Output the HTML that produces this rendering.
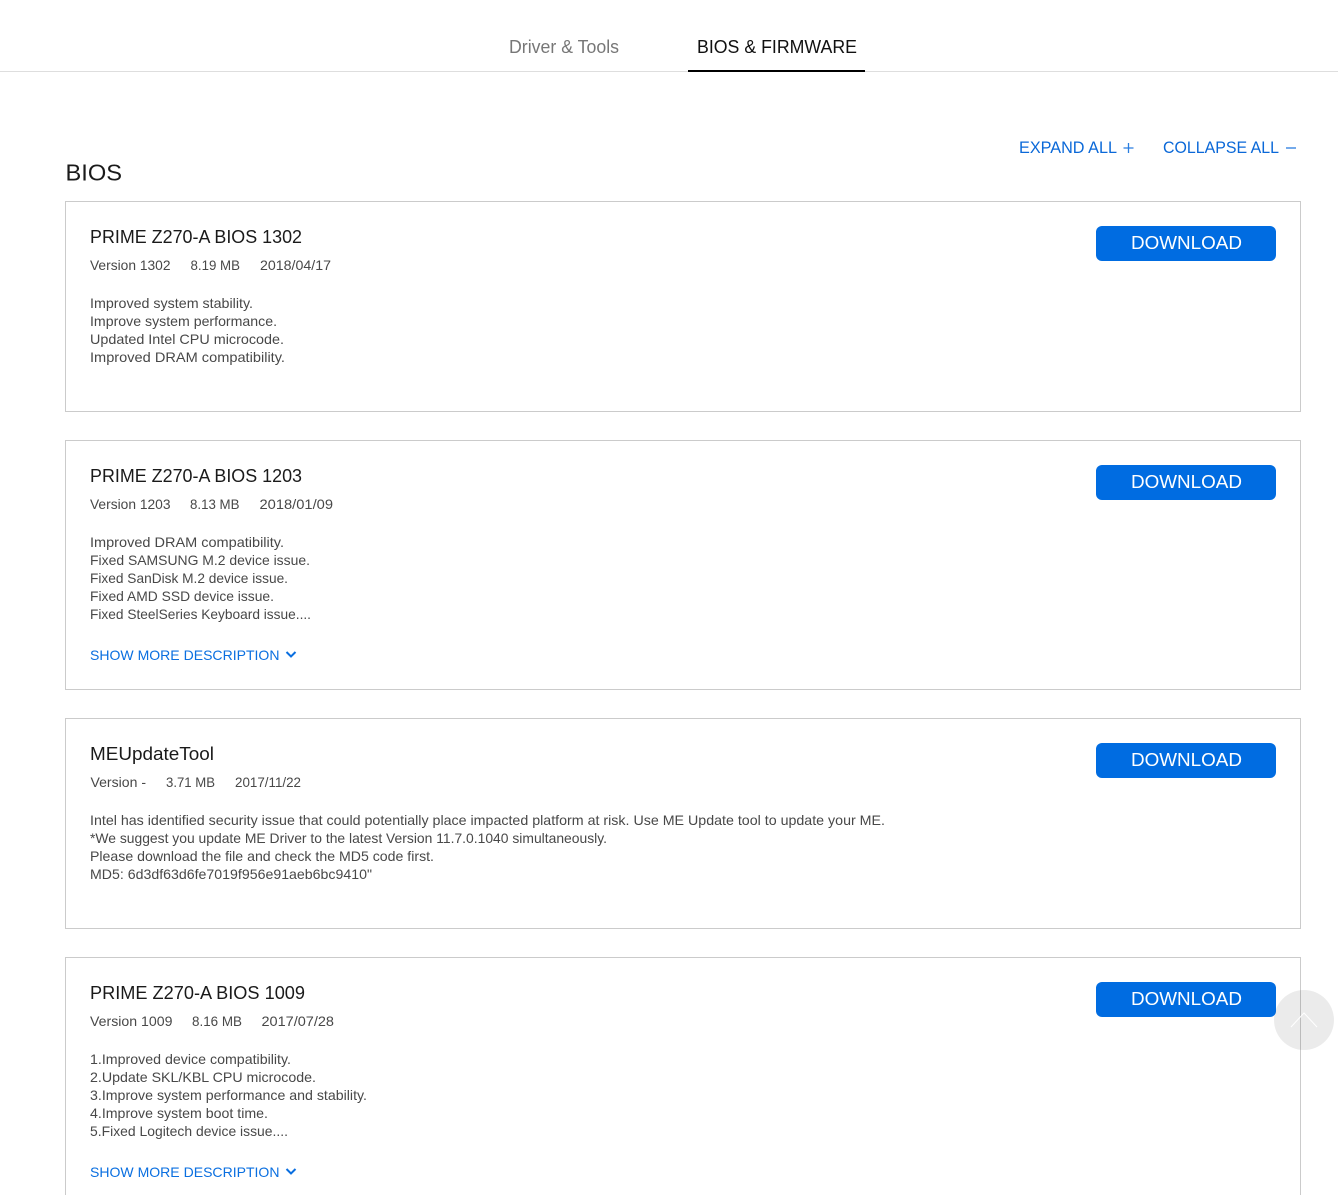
<!DOCTYPE html>
<html lang="en">
<head>
<meta charset="utf-8">
<title>BIOS &amp; FIRMWARE</title>
<style>
html,body{margin:0;padding:0;width:1338px;height:1195px;overflow:hidden;background:#fff}
svg{display:block;font-family:"Liberation Sans",sans-serif}
.t{font-size:18px;fill:#1a1a1a}
.m{font-size:14px;fill:#484848}
.d{font-size:14px;fill:#484848}
.s{font-size:14px;fill:#0a6fe0}
.b{font-size:18px;fill:#fff}
.e{font-size:17px;fill:#0a68d8}
.c{fill:#fff;stroke:#cbcbcb;stroke-width:1}
.btn{fill:#006ce1}
</style>
</head>
<body>
<svg width="1338" height="1195" viewBox="0 0 1338 1195" xmlns="http://www.w3.org/2000/svg">
<rect x="0" y="71" width="1338" height="1" fill="#dedede"/>
<rect x="688" y="70" width="177" height="2" fill="#000"/>
<text x="509" y="53" font-size="18" fill="#777" textLength="110" lengthAdjust="spacingAndGlyphs">Driver &amp; Tools</text>
<text x="697" y="53" font-size="18" fill="#111" textLength="160" lengthAdjust="spacingAndGlyphs">BIOS &amp; FIRMWARE</text>

<text class="e" x="1019" y="153" textLength="98" lengthAdjust="spacingAndGlyphs">EXPAND ALL</text>
<path d="M1123.500 148h10M1128.500 143v10" stroke="#2a7de0" stroke-width="1.300" fill="none"/>
<text class="e" x="1163" y="153" textLength="116" lengthAdjust="spacingAndGlyphs">COLLAPSE ALL</text>
<path d="M1286 148h10" stroke="#2a7de0" stroke-width="1.300" fill="none"/>

<text x="65.500" y="180.500" font-size="23" fill="#1a1a1a" textLength="56.500" lengthAdjust="spacingAndGlyphs">BIOS</text>

<!-- Card 1 -->
<rect class="c" x="65.500" y="201.500" width="1235" height="210"/>
<text class="t" x="90" y="243" textLength="212" lengthAdjust="spacingAndGlyphs">PRIME Z270-A BIOS 1302</text>
<text class="m" x="90" y="270" textLength="80.500" lengthAdjust="spacingAndGlyphs">Version 1302</text>
<text class="m" x="190.500" y="270" textLength="49.500" lengthAdjust="spacingAndGlyphs">8.19 MB</text>
<text class="m" x="260" y="270" textLength="71" lengthAdjust="spacingAndGlyphs">2018/04/17</text>
<text class="d" x="90" y="308" textLength="163" lengthAdjust="spacingAndGlyphs">Improved system stability.</text>
<text class="d" x="90" y="326" textLength="187" lengthAdjust="spacingAndGlyphs">Improve system performance.</text>
<text class="d" x="90" y="344" textLength="194" lengthAdjust="spacingAndGlyphs">Updated Intel CPU microcode.</text>
<text class="d" x="90" y="362" textLength="195" lengthAdjust="spacingAndGlyphs">Improved DRAM compatibility.</text>
<rect class="btn" x="1096" y="226" width="180" height="35" rx="6"/>
<text class="b" x="1131" y="249" textLength="111" lengthAdjust="spacingAndGlyphs">DOWNLOAD</text>

<!-- Card 2 -->
<rect class="c" x="65.500" y="440.500" width="1235" height="249"/>
<text class="t" x="90" y="482" textLength="212" lengthAdjust="spacingAndGlyphs">PRIME Z270-A BIOS 1203</text>
<text class="m" x="90" y="509" textLength="80.500" lengthAdjust="spacingAndGlyphs">Version 1203</text>
<text class="m" x="190" y="509" textLength="49.500" lengthAdjust="spacingAndGlyphs">8.13 MB</text>
<text class="m" x="259.500" y="509" textLength="73.500" lengthAdjust="spacingAndGlyphs">2018/01/09</text>
<text class="d" x="90" y="547" textLength="194" lengthAdjust="spacingAndGlyphs">Improved DRAM compatibility.</text>
<text class="d" x="90" y="565" textLength="220" lengthAdjust="spacingAndGlyphs">Fixed SAMSUNG M.2 device issue.</text>
<text class="d" x="90" y="583" textLength="198" lengthAdjust="spacingAndGlyphs">Fixed SanDisk M.2 device issue.</text>
<text class="d" x="90" y="601" textLength="184" lengthAdjust="spacingAndGlyphs">Fixed AMD SSD device issue.</text>
<text class="d" x="90" y="619" textLength="221" lengthAdjust="spacingAndGlyphs">Fixed SteelSeries Keyboard issue....</text>
<text class="s" x="90" y="660" textLength="189.500" lengthAdjust="spacingAndGlyphs">SHOW MORE DESCRIPTION</text>
<path d="M286.500 652l4.500 4.500 4.500-4.500" stroke="#0a6fe0" stroke-width="2" fill="none"/>
<rect class="btn" x="1096" y="465" width="180" height="35" rx="6"/>
<text class="b" x="1131" y="488" textLength="111" lengthAdjust="spacingAndGlyphs">DOWNLOAD</text>

<!-- Card 3 -->
<rect class="c" x="65.500" y="718.500" width="1235" height="210"/>
<text class="t" x="90" y="760" textLength="124" lengthAdjust="spacingAndGlyphs">MEUpdateTool</text>
<text class="m" x="90.500" y="787" textLength="55.500" lengthAdjust="spacingAndGlyphs">Version -</text>
<text class="m" x="166" y="787" textLength="49" lengthAdjust="spacingAndGlyphs">3.71 MB</text>
<text class="m" x="235" y="787" textLength="66" lengthAdjust="spacingAndGlyphs">2017/11/22</text>
<text class="d" x="90" y="825" textLength="795" lengthAdjust="spacingAndGlyphs">Intel has identified security issue that could potentially place impacted platform at risk. Use ME Update tool to update your ME.</text>
<text class="d" x="90" y="843" textLength="517" lengthAdjust="spacingAndGlyphs">*We suggest you update ME Driver to the latest Version 11.7.0.1040 simultaneously.</text>
<text class="d" x="90" y="861" textLength="344" lengthAdjust="spacingAndGlyphs">Please download the file and check the MD5 code first.</text>
<text class="d" x="90" y="879" textLength="282" lengthAdjust="spacingAndGlyphs">MD5: 6d3df63d6fe7019f956e91aeb6bc9410"</text>
<rect class="btn" x="1096" y="743" width="180" height="35" rx="6"/>
<text class="b" x="1131" y="766" textLength="111" lengthAdjust="spacingAndGlyphs">DOWNLOAD</text>

<!-- Card 4 (continues below the frame; bottom edge not drawn) -->
<path d="M65.500 1195V957.500H1300.500V1195" fill="none" stroke="#cbcbcb" stroke-width="1"/>
<text class="t" x="90" y="999" textLength="215" lengthAdjust="spacingAndGlyphs">PRIME Z270-A BIOS 1009</text>
<text class="m" x="90" y="1026" textLength="82.500" lengthAdjust="spacingAndGlyphs">Version 1009</text>
<text class="m" x="192" y="1026" textLength="50" lengthAdjust="spacingAndGlyphs">8.16 MB</text>
<text class="m" x="261.500" y="1026" textLength="72.500" lengthAdjust="spacingAndGlyphs">2017/07/28</text>
<text class="d" x="90" y="1064" textLength="201" lengthAdjust="spacingAndGlyphs">1.Improved device compatibility.</text>
<text class="d" x="90" y="1082" textLength="226" lengthAdjust="spacingAndGlyphs">2.Update SKL/KBL CPU microcode.</text>
<text class="d" x="90" y="1100" textLength="277" lengthAdjust="spacingAndGlyphs">3.Improve system performance and stability.</text>
<text class="d" x="90" y="1118" textLength="178" lengthAdjust="spacingAndGlyphs">4.Improve system boot time.</text>
<text class="d" x="90" y="1136" textLength="198" lengthAdjust="spacingAndGlyphs">5.Fixed Logitech device issue....</text>
<text class="s" x="90" y="1177" textLength="189.500" lengthAdjust="spacingAndGlyphs">SHOW MORE DESCRIPTION</text>
<path d="M286.500 1169l4.500 4.500 4.500-4.500" stroke="#0a6fe0" stroke-width="2" fill="none"/>
<rect class="btn" x="1096" y="982" width="180" height="35" rx="6"/>
<text class="b" x="1131" y="1005" textLength="111" lengthAdjust="spacingAndGlyphs">DOWNLOAD</text>

<!-- Back to top -->
<circle cx="1304" cy="1020" r="30" fill="#000" fill-opacity=".08"/>
<path d="M1291 1027l13-14 13 14" stroke="#fff" stroke-width="1" fill="none"/>
</svg>
</body>
</html>
